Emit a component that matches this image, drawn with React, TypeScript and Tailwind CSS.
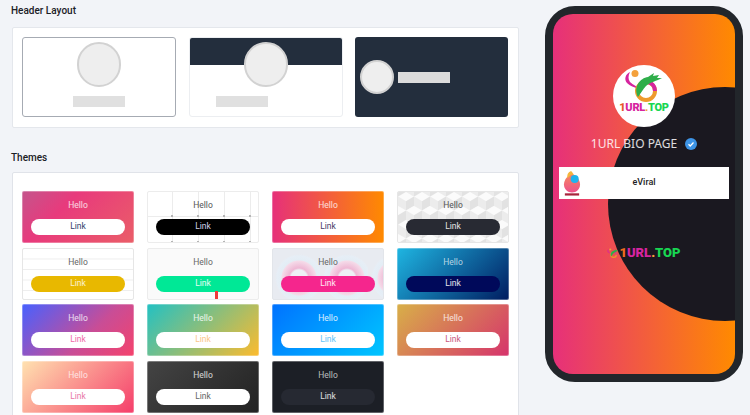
const themes = [
  { bg: "border-white/30 bg-[linear-gradient(135deg,#c4558c,#e83a7c_35%,#ea5e68)]", hello: "text-white/80", btn: "bg-white text-[#33406b]" },
  { bg: "border-[#ececec] bg-white bg-[radial-gradient(circle,#b5b5b5_0.8px,transparent_1.2px),linear-gradient(#ececec_1px,transparent_1px),linear-gradient(90deg,#ececec_1px,transparent_1px)] bg-[size:26px_26px] bg-[position:12px_12px,-1px_-1px,-1px_-1px]", hello: "text-[#555]", btn: "bg-black text-[#cfd2ea]" },
  { bg: "border-white/30 bg-[linear-gradient(90deg,#e6307a,#ff8a00)]", hello: "text-white/80", btn: "bg-white text-[#4a3a66]" },
  { bg: "border-[#e6e6e6] bg-[#f2f2f2]", hello: "text-[#555]", btn: "bg-[#282a33] text-[#e5e5e5]", cubes: true },
  { bg: "border-[#e6e6e6] bg-white bg-[linear-gradient(#eeeeee_1px,transparent_1px)] bg-[size:100%_10.5px]", hello: "text-[#666]", btn: "bg-[#e8b800] text-white/80" },
  { bg: "border-[#ececec] bg-[#fafafa]", hello: "text-[#666]", btn: "bg-[#00e896] text-white/90", mark: true },
  { bg: "border-[#e2e5ea] bg-[#e8ebf1] bg-[radial-gradient(circle_at_27px_30px,#eef0f5_8px,#eeb8d4_10px,#f5dbe9_17px,#e3edf5_18px,#e6eef6_22px,transparent_24px)] bg-[size:48px_52px]", hello: "text-[#666]", btn: "bg-[#f5268d] text-white/90" },
  { bg: "border-white/30 bg-[linear-gradient(135deg,#1fb6e2,#001c60)]", hello: "text-white/70", btn: "bg-[#00095a] text-white/90" },
  { bg: "border-white/30 bg-[linear-gradient(135deg,#4761ff,#c94d96_60%,#f5426c)]", hello: "text-white/80", btn: "bg-white text-[#f06aa8]" },
  { bg: "border-white/30 bg-[linear-gradient(135deg,#22c1c3,#fdbb2d)]", hello: "text-white/85", btn: "bg-white text-[#fbc68a]" },
  { bg: "border-white/30 bg-[linear-gradient(135deg,#0072ff,#00c6ff)]", hello: "text-white/85", btn: "bg-white text-[#62c4f8]" },
  { bg: "border-white/30 bg-[linear-gradient(135deg,#d8b048,#d6336c)]", hello: "text-white/80", btn: "bg-white text-[#c9587e]" },
  { bg: "border-white/30 bg-[linear-gradient(135deg,#ffe2b0,#f53d6a)]", hello: "text-white/75", btn: "bg-white text-[#e878a8]" },
  { bg: "border-white/30 bg-[linear-gradient(135deg,#444444,#222222)]", hello: "text-white/80", btn: "bg-white text-[#666]" },
  { bg: "border-white/30 bg-[#1c1f26]", hello: "text-white/70", btn: "bg-[#262932] text-white/85" },
];

function Circle({ className }: { className: string }) {
  return <div className={`rounded-full border-2 border-[#d2d2d2] bg-[#eeeeee] ${className}`} />;
}

function LogoMark({ className }: { className: string }) {
  return (
    <svg viewBox="12 5 40 34" className={className}>
      <path d="M18 7C13 9 12 15 15 18c3 3 7 4 12 6-2-3-6-4-9-7-2-3-2-6 0-10z" fill="#d6249f" />
      <circle cx="23" cy="8.5" r="3.5" fill="#f4a13c" />
      <circle cx="34" cy="26" r="9" fill="none" stroke="#ee9a2c" strokeWidth="4" />
      <path d="M36 17a9 9 0 0 1 7 9" fill="none" stroke="#d6249f" strokeWidth="4" />
      <path d="M26 32C21 22 28 13 36 12l6-4-1 3 6-1-2 3 5 0c-5 3-12 4-16 8-3 3-5 7-8 11z" fill="#2fae4a" />
    </svg>
  );
}

function Cubes() {
  return (
    <svg className="absolute inset-0 h-full w-full">
      <defs>
        <pattern id="cubes" width="16" height="28" patternUnits="userSpaceOnUse">
          <g id="cube">
            <path d="M8 0l8 4.6-8 4.6-8-4.6z" fill="#fbfbfb" />
            <path d="M0 4.6l8 4.6v9.2l-8-4.6z" fill="#ececec" />
            <path d="M16 4.6l-8 4.6v9.2l8-4.6z" fill="#e2e2e2" />
          </g>
          <use href="#cube" x="-8" y="14" />
          <use href="#cube" x="8" y="14" />
          <use href="#cube" x="-8" y="-14" />
          <use href="#cube" x="8" y="-14" />
        </pattern>
      </defs>
      <rect width="100%" height="100%" fill="url(#cubes)" />
    </svg>
  );
}

export default function App() {
  return (
    <div className="flex h-[415px] w-[750px] overflow-hidden bg-[#f2f4f8] font-['Roboto',sans-serif]">
      <div className="w-[519px] shrink-0 pl-[12px]">
        <h2 className="-ml-px h-[27px] pt-[4px] text-[10px] leading-[14px] font-medium text-[#1b2026]">Header Layout</h2>
        <div className="flex h-[101px] w-[507px] gap-[12.5px] rounded-[2px] border border-[#e4e7ec] bg-white px-[9px] pt-[9px]">
          <div className="flex h-[80px] w-[154px] flex-col items-center rounded-[3px] border border-[#a6abb3] bg-white pt-[4px]">
            <Circle className="h-[45px] w-[44px]" />
            <div className="mt-[9px] h-[11px] w-[52px] bg-[#e0e0e0]" />
          </div>
          <div className="relative flex h-[80px] w-[154px] flex-col overflow-hidden rounded-[3px] border border-[#eceef1] bg-white">
            <div className="h-[27px] bg-[#232e3d]" />
            <Circle className="absolute top-[4px] left-[54px] h-[45px] w-[44px]" />
            <div className="mt-[31px] ml-[26px] h-[11px] w-[52px] bg-[#e0e0e0]" />
          </div>
          <div className="flex h-[80px] w-[153px] items-center gap-[3.5px] rounded-[3px] bg-[#232e3d] pl-[5px]">
            <Circle className="h-[34px] w-[34px]" />
            <div className="h-[11px] w-[52px] bg-[#dcdcdc]" />
          </div>
        </div>
        <h2 className="-ml-px h-[44px] pt-[23px] text-[10px] leading-[14px] font-medium text-[#1b2026]">Themes</h2>
        <div className="grid h-[260px] w-[507px] grid-cols-4 content-start gap-x-[13px] gap-y-[4.5px] rounded-t-[2px] border border-[#e0e3e9] bg-white px-[9px] pt-[18px]">
          {themes.map((t, i) => (
            <div key={i} className={`relative flex h-[52px] w-[112px] flex-col items-center overflow-hidden rounded-[2px] border bg-origin-border ${t.bg}`}>
              {t.cubes && <Cubes />}
              <span className={`relative mt-[7px] text-[8.5px] leading-[12px] ${t.hello}`}>Hello</span>
              <span className={`relative mt-[8px] flex h-[16px] w-[94px] items-center justify-center rounded-full pb-[1px] text-[8.5px] ${t.btn}`}>Link</span>
              {t.mark && <span className="absolute bottom-0 left-[67px] h-[8px] w-[3px] bg-[#ee3a3a]" />}
            </div>
          ))}
        </div>
      </div>

      <div className="mt-[6px] ml-[26px] h-[376px] w-[198px] shrink-0 rounded-[30px] border-[8px] border-[#22262b] bg-[#22262b]">
        <div className="relative flex h-full flex-col items-center overflow-hidden rounded-[20px] bg-[linear-gradient(90deg,#e6307a,#ff8a00)]">
          <div className="absolute top-[73px] left-[55px] h-[234px] w-[234px] rounded-full bg-[#1a1820]" />
          <div className="relative mt-[51px] flex h-[62px] w-[62px] flex-col items-center rounded-full bg-white pt-[5px]">
            <LogoMark className="h-[34px] w-[40px] shrink-0" />
            <span className="mt-[-2px] text-[11px] leading-[12px] font-black tracking-tight whitespace-nowrap">
              <span className="text-[#e8542a]">1</span>
              <span className="text-[#d6249f]">URL</span>
              <span className="text-[#f4a13c]">.</span>
              <span className="text-[#18d652]">TOP</span>
            </span>
          </div>
          <div className="relative mt-[8px] flex h-[18px] items-center font-['Noto_Sans',sans-serif] text-[12px] text-white/85">
            1URL BIO PAGE
            <svg viewBox="0 0 24 24" className="ml-[8px] h-[12px] w-[12px]">
              <circle cx="12" cy="12" r="12" fill="#3d94e6" />
              <path d="M7 12.5l3.5 3.5L17 9" fill="none" stroke="#fff" strokeWidth="2.5" />
            </svg>
          </div>
          <div className="relative mt-[14px] ml-[6px] flex h-[32px] w-[170px] items-center self-start bg-white">
            <svg viewBox="0 0 20 28" className="ml-[4px] h-[25px] w-[18px]">
              <defs>
                <linearGradient id="egg" x1="0" y1="0" x2="0" y2="1">
                  <stop offset="0" stopColor="#f58a5c" />
                  <stop offset="1" stopColor="#ee4f8c" />
                </linearGradient>
              </defs>
              <path d="M10 3C5 5 1 10 1 15c0 5 4 9 9 9s9-4 9-9c0-5-4-10-9-12z" fill="url(#egg)" />
              <path d="M9 0C6 1 4 4 5 8l3-3c1-1 3-1 4-1-1-2-2-3-3-4z" fill="#f5b63c" />
              <circle cx="13" cy="9" r="4.5" fill="#1eb4ee" />
              <rect x="2" y="25" width="16" height="2.5" fill="#a8233c" />
            </svg>
            <span className="flex-1 pr-[22px] pb-[1px] text-center text-[9px] font-medium text-[#1c1c24]">eViral</span>
          </div>
          <div className="relative mt-[46px] flex items-center text-[13px] leading-[16px] font-black whitespace-nowrap">
            <LogoMark className="h-[11px] w-[12px]" />
            <span>
              <span className="text-[#ee6a1f]">1</span>
              <span className="text-[#d6249f]">URL</span>
              <span className="text-[#f4a13c]">.</span>
              <span className="text-[#18d652]">TOP</span>
            </span>
          </div>
        </div>
      </div>
    </div>
  );
}
